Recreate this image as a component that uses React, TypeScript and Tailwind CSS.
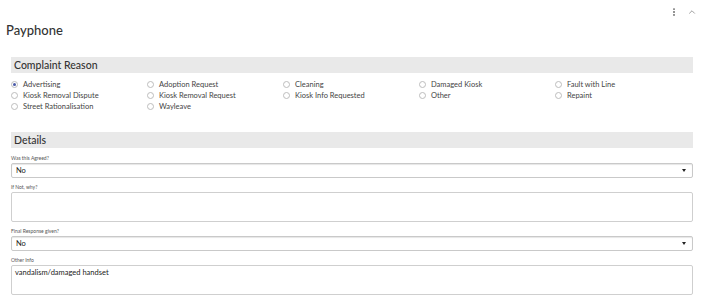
import { MoreVertical, ChevronUp } from "lucide-react";

const REASONS = [
  "Advertising",
  "Adoption Request",
  "Cleaning",
  "Damaged Kiosk",
  "Fault with Line",
  "Kiosk Removal Dispute",
  "Kiosk Removal Request",
  "Kiosk Info Requested",
  "Other",
  "Repaint",
  "Street Rationalisation",
  "Wayleave",
];

function SectionHeader({ title }: { title: string }) {
  return (
    <div className="ml-[11px] mr-[12px] h-[16px] bg-[#e9e9e9] flex items-center pl-[3px] text-[10.5px] leading-none text-[#333] font-medium">
      {title}
    </div>
  );
}

function Label({ text }: { text: string }) {
  return <div className="text-[5px] leading-[6px] text-[#555] mb-[2px]">{text}</div>;
}

function SelectBox({ value }: { value: string }) {
  return (
    <div className="h-[15px] border border-[#c9c9c9] rounded-[2px] shadow-[inset_0_1px_1px_rgba(0,0,0,0.1)] flex items-center justify-between pl-[4px] pr-[6px] text-[7.5px] text-[#222]">
      <span>{value}</span>
      <span className="w-0 h-0 border-l-[2px] border-r-[2px] border-t-[3px] border-l-transparent border-r-transparent border-t-[#222]" />
    </div>
  );
}

function TextBox({ value }: { value?: string }) {
  return (
    <div className="h-[30px] border border-[#cfcfcf] rounded-[2px] px-[3px] pt-[2px] text-[7.5px] leading-[10px] text-[#222]">
      {value}
    </div>
  );
}

export default function App() {
  const selected = "Advertising";

  return (
    <div className="w-[705px] h-[306px] bg-white overflow-hidden font-['Lato','Liberation_Sans',sans-serif]">
      <div className="h-[22px] flex items-center justify-end gap-[8px] pr-[8px] pt-[2px] text-[#666]">
        <MoreVertical className="w-[10px] h-[10px]" strokeWidth={2.5} />
        <ChevronUp className="w-[10px] h-[10px]" strokeWidth={1.5} />
      </div>
      <h1 className="px-[6px] text-[13px] leading-[17px] text-[#333] font-medium">Payphone</h1>

      <div className="mt-[18px]">
        <SectionHeader title="Complaint Reason" />
      </div>

      <div className="ml-[11px] mt-[6px] grid grid-cols-[repeat(5,136px)] auto-rows-[11px]">
        {REASONS.map((r) => (
          <label key={r} className="flex items-center gap-[5px] text-[7.5px] text-[#444] whitespace-nowrap">
            <span className="w-[7px] h-[7px] rounded-full border border-[#bdbdbd] bg-white flex items-center justify-center">
              {r === selected && <span className="w-[3px] h-[3px] rounded-full bg-[#4a5aa8]" />}
            </span>
            {r}
          </label>
        ))}
      </div>

      <div className="mt-[20px]">
        <SectionHeader title="Details" />
      </div>

      <div className="ml-[11px] mr-[12px] mt-[7px] flex flex-col">
        <Label text="Was this Agreed?" />
        <SelectBox value="No" />
        <div className="mt-[6px]">
          <Label text="If Not, why?" />
          <TextBox />
        </div>
        <div className="mt-[6px]">
          <Label text="Final Response given?" />
          <SelectBox value="No" />
        </div>
        <div className="mt-[6px]">
          <Label text="Other Info" />
          <TextBox value="vandalism/damaged handset" />
        </div>
      </div>
    </div>
  );
}
